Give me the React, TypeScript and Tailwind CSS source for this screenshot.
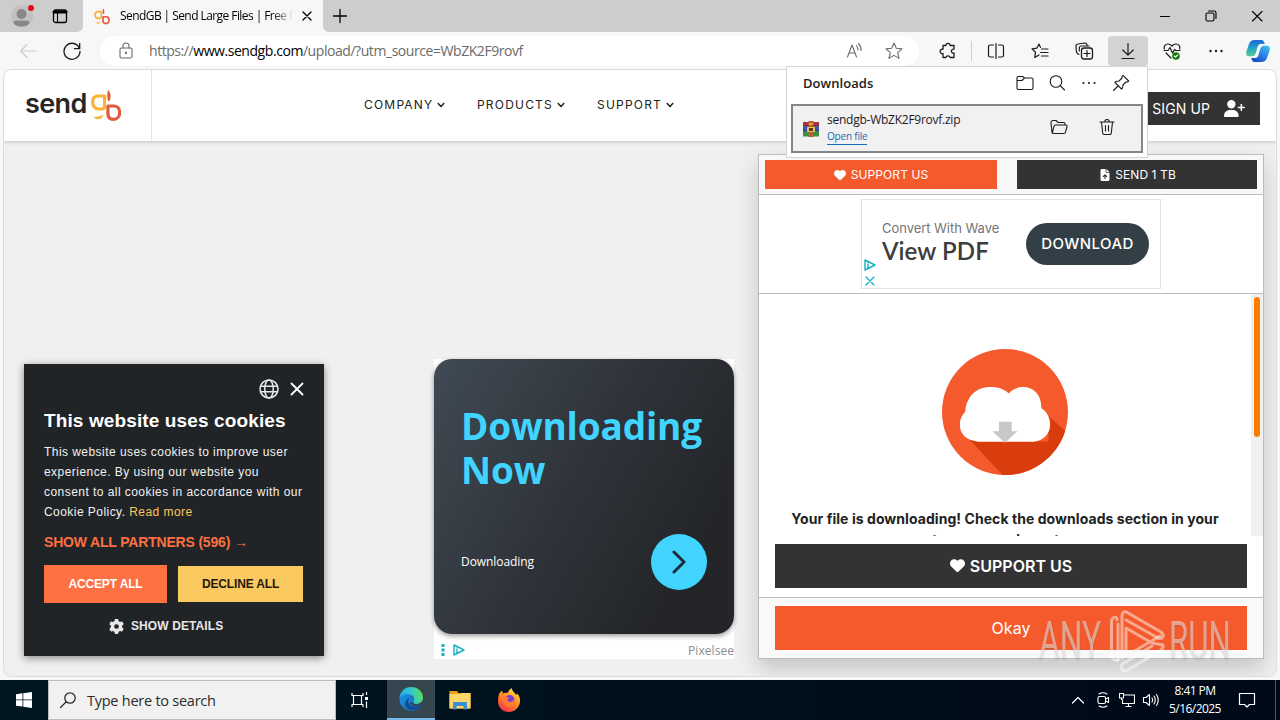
import React from "react";
import { FaHeart, FaUserPlus, FaFileArrowUp, FaGear } from "react-icons/fa6";

type SvgProps = { className?: string; vb?: string; children: React.ReactNode };

function Line({ className = "size-5", vb = "0 0 20 20", children }: SvgProps) {
  return (
    <svg
      viewBox={vb}
      className={`shrink-0 ${className}`}
      fill="none"
      stroke="currentColor"
      strokeWidth="1.1"
      strokeLinecap="round"
      strokeLinejoin="round"
    >
      {children}
    </svg>
  );
}

function GbMark({ className }: { className?: string }) {
  return (
    <svg viewBox="0 0 32 33" className={`shrink-0 ${className}`} fill="none" strokeWidth="3.2" strokeLinejoin="round">
      <path d="M14.6 7H8.2C4.2 7 2.6 9.8 2.6 13C2.6 17 4.8 20 8.8 20H11.5Q14.6 20 14.6 17Z" stroke="#f9b233" />
      <path d="M3.5 28C7 28.300 10.500 27 13.500 25.500C12.500 30 7 32.500 3.500 28Z" fill="#f9b233" />
      <path d="M17.900 17H24C28 17 29.700 20 29.700 23.500C29.700 27.500 27 30.400 23.500 30.400C19.800 30.400 17.900 28 17.900 24.500Z" stroke="#e2593c" />
      <path d="M18 1C20.500 3.500 21.500 7 19.500 12H18C17 8.500 17 4 18 1Z" fill="#e2593c" />
    </svg>
  );
}

function TabStrip() {
  return (
    <div className="flex h-8 shrink-0 bg-[#f7f7f7] text-black">
      <div className="flex w-[83px] items-center gap-[18px] rounded-br-md bg-[#cdcdcd] pl-[10px]">
        <svg viewBox="0 0 24 24" className="size-6">
          <circle cx="12" cy="12" r="11" fill="#c3c1c0" />
          <circle cx="11.500" cy="10" r="5" fill="#898786" />
          <path d="M3.500 19C3.500 16.500 5.500 16.500 11.500 16.500S19.500 16.500 19.500 19C18.500 21.500 14.500 22.500 11.500 22.500S4.500 21.500 3.500 19Z" fill="#898786" />
          <circle cx="21" cy="4" r="3" fill="#e00b1c" />
        </svg>
        <Line className="size-4" vb="0 0 16 16">
          <rect x="1.5" y="2" width="13" height="12.5" rx="2" strokeWidth="1.3" />
          <path d="M2 4H14" strokeWidth="3" />
          <path d="M5.5 5V14" />
        </Line>
      </div>
      <div className="flex w-[240px] items-center pl-[10px]">
        <GbMark className="h-[17px] w-[18px]" />
        <div className="ml-[9px] w-[173px] shrink-0 overflow-hidden bg-linear-to-r from-black from-88% to-transparent bg-clip-text font-['Open_Sans','Noto_Sans',sans-serif] text-[12px] leading-5 tracking-[-0.57px] whitespace-nowrap text-transparent">
          SendGB | Send Large Files | Free f
        </div>
        <Line className="ml-[8px] size-3" vb="0 0 12 12">
          <path d="M2 2L10 10M10 2L2 10" strokeWidth="1.3" />
        </Line>
      </div>
      <div className="flex flex-1 items-center rounded-bl-md bg-[#cdcdcd] pl-[9px]">
        <Line className="size-4" vb="0 0 16 16">
          <path d="M8 1.5V14.5M1.5 8H14.5" strokeWidth="1.3" />
        </Line>
        <div className="ml-auto flex items-center pr-[15px]">
          <Line className="mr-[34px] size-3" vb="0 0 12 12">
            <path d="M1.5 6.5H10.5" strokeWidth="1" />
          </Line>
          <Line className="mr-[32px] size-3" vb="0 0 12 12">
            <rect x="1" y="3" width="8" height="8" rx="1.5" />
            <path d="M3.5 1H9A2 2 0 0 1 11 3V8.5" />
          </Line>
          <Line className="size-4" vb="0 0 16 16">
            <path d="M3.5 3.5L13 13M13 3.5L3.5 13" />
          </Line>
        </div>
      </div>
    </div>
  );
}

function Cell({ children, active = false }: { children: React.ReactNode; active?: boolean }) {
  return (
    <div
      className={`flex h-[30px] shrink-0 items-center justify-center ${
        active ? "mx-[2px] w-10 rounded-[4px] bg-[#d3d3d3]" : "w-11"
      }`}
    >
      {children}
    </div>
  );
}

function Copilot() {
  return (
    <svg viewBox="0 0 24 24" className="size-6">
      <defs>
        <linearGradient id="cpA" x1="0.3" y1="0" x2="0.4" y2="1">
          <stop offset="0" stopColor="#1b63d8" />
          <stop offset="0.45" stopColor="#1f9fd0" />
          <stop offset="1" stopColor="#56d08e" />
        </linearGradient>
        <linearGradient id="cpB" x1="1" y1="0" x2="0.3" y2="1">
          <stop offset="0" stopColor="#39c8ef" />
          <stop offset="0.5" stopColor="#2f87ee" />
          <stop offset="1" stopColor="#154fc4" />
        </linearGradient>
      </defs>
      <path d="M9 1H15.5C17.5 1 18.2 3 18.8 5H15C12.8 5 12 6.6 11.4 8.6L9.8 14C9.2 16 8 17.3 6 17.3H3C.4 17.3-.2 15 .4 12.6L3 5C4 2.2 5.6 1 9 1Z" fill="url(#cpA)" />
      <path d="M15 23H8.500C6.500 23 5.800 21 5.200 19H9C11.200 19 12 17.400 12.600 15.400L14.200 10C14.800 8 16 6.700 18 6.700H21C23.600 6.700 24.200 9 23.600 11.400L21 19C20 21.800 18.400 23 15 23Z" fill="url(#cpB)" />
    </svg>
  );
}

function Toolbar() {
  return (
    <div className="flex h-9 shrink-0 items-center bg-[#f7f7f7] pt-[2px] text-[#1b1b1b]">
      <Line className="ml-[18px] size-5 text-[#c9c9c9]">
        <path d="M18 10H2.500M9 3.500L2.500 10L9 16.500" />
      </Line>
      <Line className="ml-[24px] size-5">
        <path d="M17.500 7.500A8 8 0 1 0 18 10.500M17.700 2.500V7.700H12.500" strokeWidth="1.300" />
      </Line>
      <div className="ml-[18px] flex h-[30px] w-[819px] items-center rounded-full bg-white text-[#6b6b6b]">
        <Line className="ml-[16px] size-5">
          <rect x="4" y="7" width="12" height="10" rx="1.500" />
          <path d="M7 7V5A3 3 0 0 1 13 5V7" />
          <circle cx="10" cy="12" r=".6" fill="currentColor" />
        </Line>
        <div className="ml-[13px] font-['Open_Sans','Noto_Sans',sans-serif] text-[14px] leading-5 tracking-[-0.44px] whitespace-nowrap">
          https://<span className="text-black">www.sendgb.com</span>/upload/?utm_source=WbZK2F9rovf
        </div>
        <Line className="ml-auto size-5">
          <path d="M3.500 16L8 4L12.500 16M5 12H11M12.500 4.500Q14 6.500 14 9M14.500 2.500Q17.500 5.500 17 9.500" />
        </Line>
        <Line className="mr-[15px] ml-[20px] size-5">
          <path d="M10 2L12.300 7.300L18 7.900L13.700 11.700L15 17.400L10 14.400L5 17.400L6.300 11.700L2 7.900L7.700 7.300Z" />
        </Line>
      </div>
      <div className="ml-[7px] flex items-center">
        <Cell>
          <Line>
            <path d="M5 4.500H7.800A2.200 2.200 0 1 1 12.200 4.500H16V8.200A2 2 0 1 0 16 12V16.500H12.200A2.300 2.300 0 0 0 7.800 16.500H5V12.500A2.200 2.200 0 1 1 5 8.300Z" strokeWidth="1.300" />
          </Line>
        </Cell>
        <div className="mr-[2px] ml-px h-5 w-px bg-[#cfcfcf]" />
        <Cell>
          <Line>
            <path d="M7.500 4H4A1.500 1.500 0 0 0 2.500 5.500V14.500A1.500 1.500 0 0 0 4 16H7.500M12.500 4H16A1.500 1.500 0 0 1 17.500 5.500V14.500A1.500 1.500 0 0 1 16 16H12.500M10 2.500V17.500" strokeWidth="1.200" />
          </Line>
        </Cell>
        <Cell>
          <Line>
            <path d="M10.500 6.500L9 3L6.800 7.200L2 7.900L5.500 11.300L4.700 16.500L9 14M11.500 8H18M10.500 11.500H18M11.500 15H18" strokeWidth="1.200" />
          </Line>
        </Cell>
        <Cell>
          <Line>
            <rect x="7.500" y="7" width="11" height="11" rx="2.500" strokeWidth="1.300" />
            <path d="M13 9.500V15.500M10 12.500H16M4.800 13.300C3 13 2.500 11.500 2.300 9.500L2 5.500A2.200 2.200 0 0 1 4 3L10.500 2C12 2 13 3 13.200 4.500M5.300 10V7A2 2 0 0 1 7.300 5H15" strokeWidth="1.200" />
          </Line>
        </Cell>
        <Cell active>
          <Line>
            <path d="M10 2.500V14M4.800 9L10 14.200L15.200 9M4 17.500H16" strokeWidth="1.200" />
          </Line>
        </Cell>
        <Cell>
          <Line>
            <path d="M2.300 8C1.500 5 3.500 3 6 3C8 3 9 4 10 5C11 4 12 3 14 3C16.500 3 18.500 5 17.700 8M2 9.500H6L8 6.500L10.500 12L12.500 8.500L13.500 9.500H18M4 12L9 17" strokeWidth="1.200" />
            <circle cx="14" cy="15" r="3.800" fill="#107c10" stroke="none" />
            <path d="M12.300 15L13.500 16.200L15.800 13.900" stroke="white" />
          </Line>
        </Cell>
        <Cell>
          <svg viewBox="0 0 20 20" className="size-5" fill="currentColor">
            <circle cx="4.500" cy="10" r="1.200" />
            <circle cx="10" cy="10" r="1.200" />
            <circle cx="15.500" cy="10" r="1.200" />
          </svg>
        </Cell>
        <div className="ml-[8px]">
          <Copilot />
        </div>
      </div>
    </div>
  );
}

function NavItem({ label, className }: { label: string; className: string }) {
  return (
    <div className={`flex items-center gap-[4px] ${className}`}>
      <span>{label}</span>
      <Line className="size-2" vb="0 0 8 8">
        <path d="M1.200 2.500L4 5.500L6.800 2.500" strokeWidth="1.500" />
      </Line>
    </div>
  );
}

function SiteHeader() {
  return (
    <header className="flex h-[71px] shrink-0 bg-white shadow-[0_1px_4px_rgba(0,0,0,0.2)]">
      <div className="flex w-[148px] shrink-0 border-r border-[#e4e4e4] pt-[18px] pl-[21px]">
        <div className="w-[65px] shrink-0 font-['Inter','Liberation_Sans',sans-serif] text-[27px] leading-[32px] font-semibold tracking-[-0.6px] text-[#262626]">
          send
        </div>
        <GbMark className="mt-px h-[33px] w-[32px]" />
      </div>
      <nav className="flex h-[70px] items-center pl-[212px] font-['Inter','Liberation_Sans',sans-serif] text-[12px] tracking-[1.2px] text-[#222]">
        <NavItem label="COMPANY" className="w-[113px]" />
        <NavItem label="PRODUCTS" className="w-[120px]" />
        <NavItem label="SUPPORT" className="w-[100px]" />
      </nav>
      <div className="mt-[22px] mr-[16px] ml-auto flex h-[33px] w-[130px] items-center justify-end bg-[#333] pr-[15px] font-['Inter','Liberation_Sans',sans-serif] text-[14px] tracking-[0.1px] whitespace-nowrap text-white">
        SIGN UP
        <FaUserPlus className="ml-[14px] h-[17px] w-[21px]" />
      </div>
    </header>
  );
}

function CookieDialog() {
  return (
    <section className="mt-[223px] ml-[20px] flex h-[292px] w-[300px] shrink-0 flex-col bg-[#212427] px-5 font-['Liberation_Sans',Arial,sans-serif] text-white shadow-[0_2px_8px_rgba(0,0,0,0.45)]">
      <div className="flex items-center justify-end gap-[11px] pt-[15px]">
        <Line className="size-5 text-[#e8e8e8]">
          <circle cx="10" cy="10" r="9" strokeWidth="1.500" />
          <ellipse cx="10" cy="10" rx="4.300" ry="9" strokeWidth="1.500" />
          <path d="M1.500 7.200H18.500M1.500 12.800H18.500" strokeWidth="1.500" />
        </Line>
        <Line className="size-[14px] text-white" vb="0 0 14 14">
          <path d="M1.500 1.500L12.500 12.500M12.500 1.500L1.500 12.500" strokeWidth="1.800" />
        </Line>
      </div>
      <h2 className="mt-[10px] text-[19px] leading-6 font-bold tracking-[0.12px] whitespace-nowrap">
        This website uses cookies
      </h2>
      <p className="mt-[9px] text-[12px] leading-5 tracking-[0.45px] whitespace-nowrap text-[#f1f1f1]">
        This website uses cookies to improve user
        <br />
        experience. By using our website you
        <br />
        consent to all cookies in accordance with our
        <br />
        Cookie Policy. <span className="text-[#fcc65c]">Read more</span>
      </p>
      <div className="mt-[10px] text-[14px] leading-5 font-bold tracking-[-0.18px] whitespace-nowrap text-[#fd6f42]">
        SHOW ALL PARTNERS (596) <span className="font-normal">→</span>
      </div>
      <div className="mt-[13px] flex items-center justify-between text-[12px] font-bold tracking-[-0.15px]">
        <div className="flex h-[38px] w-[123px] items-center justify-center bg-[#fe7143]">ACCEPT ALL</div>
        <div className="mr-[1px] flex h-[36px] w-[125px] items-center justify-center bg-[#fac95f] text-[#26190c]">DECLINE ALL</div>
      </div>
      <div className="mt-[14px] flex items-center gap-[7px] pl-[65px] text-[12px] leading-[18px] font-bold tracking-[0.1px] whitespace-nowrap text-[#e8e8e8]">
        <FaGear className="size-[15px]" />
        SHOW DETAILS
      </div>
    </section>
  );
}

function AdChoice({ className }: { className?: string }) {
  return (
    <Line className={`text-[#17b0c4] ${className}`} vb="0 0 12 12">
      <path d="M1 1L11 6L1 11ZM4 5V9M4 3.500V3.600" strokeWidth="1.400" />
    </Line>
  );
}

function DownloadingAd() {
  return (
    <section className="mt-[218px] ml-[110px] flex h-[300px] w-[300px] shrink-0 flex-col bg-white font-['Open_Sans','Noto_Sans',sans-serif]">
      <div className="flex h-[275px] flex-col rounded-[18px] bg-linear-[120deg,#3f4a54_0%,#30343a_45%,#232529_80%] pl-[27px] shadow-[0_2px_5px_rgba(0,0,0,0.4)]">
        <div className="flex flex-col pt-[45px] text-[37px] leading-[44px] font-bold tracking-[-0.17px] text-[#40d4ff]">
          <span>Downloading</span>
          <span>Now</span>
        </div>
        <div className="mt-[42px] flex items-center justify-between pr-[27px] text-[12px] tracking-[-0.07px] text-white">
          Downloading
          <div className="flex size-14 items-center justify-center rounded-full bg-[#40d4ff] text-[#1f2c38]">
            <Line className="h-6 w-4" vb="0 0 16 24">
              <path d="M3 2L13 12L3 22" strokeWidth="3" />
            </Line>
          </div>
        </div>
      </div>
      <div className="flex flex-1 items-center pt-[7px] pl-[7px]">
        <svg viewBox="0 0 4 12" className="h-3 w-1" fill="#17b0c4">
          <path d="M.5 0h3v3h-3zM.5 4.500h3v3h-3zM.5 9h3v3h-3z" />
        </svg>
        <AdChoice className="ml-[8px] size-3" />
        <span className="mt-[2px] ml-auto text-[12px] leading-4 tracking-[0.05px] text-[#8e8e8e]">Pixelsee</span>
      </div>
    </section>
  );
}

function CloudBadge() {
  return (
    <svg viewBox="565 54 380 380" className="size-[128px] shrink-0">
      <circle cx="755" cy="244" r="187" fill="#f45a2b" />
      <path d="M650 326L748 431A187 187 0 0 0 934 300L884 256V332Z" fill="#da3d0d" />
      <path
        d="M675 332C640 328 621 310 621 282C621 265 628 252 637 243C640 200 668 170 712 170C735 170 752 176 766 189C776 177 790 170 808 170C842 170 863 194 863 233C879 243 889 260 889 282C889 310 866 332 838 332Z"
        fill="#fff"
      />
      <path d="M737 273H775V301H792L755 335L717 301H737Z" fill="#c8c8c8" />
    </svg>
  );
}

function DownloadModal() {
  return (
    <section className="mt-[13px] ml-[24px] flex h-[505px] w-[506px] shrink-0 flex-col border border-[#bcbcbc] bg-white font-['Inter','Liberation_Sans',sans-serif] shadow-[0_10px_20px_rgba(0,0,0,0.18)]">
      <div className="flex h-[40px] shrink-0 justify-between border-b border-[#bcbcbc] bg-[#f8f8f8] px-[6px] pt-[5px] text-[12px] tracking-[0.1px] text-white">
        <div className="flex h-[29px] w-[232px] items-center justify-center gap-[5px] bg-[#f45a2b]">
          <FaHeart className="size-3" />
          SUPPORT US
        </div>
        <div className="flex h-[29px] w-[240px] items-center justify-center gap-[5px] bg-[#333] pl-[2px]">
          <FaFileArrowUp className="h-3 w-[10px]" />
          SEND 1 TB
        </div>
      </div>
      <div className="flex h-[99px] shrink-0 border-b border-[#bcbcbc] pt-[4px] pl-[102px]">
        <div className="flex h-[90px] w-[300px] border border-[#e2e2e2]">
          <div className="flex w-[20px] flex-col items-center gap-[5px] pt-[59px] pr-[5px]">
            <AdChoice className="size-3" />
            <Line className="size-[10px] text-[#17b0c4]" vb="0 0 10 10">
              <path d="M1 1L9 9M9 1L1 9" strokeWidth="1.300" />
            </Line>
          </div>
          <div className="w-[144px] pt-[19px] text-[#3c3c3c]">
            <div className="text-[13px] leading-[18px] tracking-[-0.04px] whitespace-nowrap text-[#757575]">Convert With Wave</div>
            <div className="font-['Lato','Open_Sans',sans-serif] text-[24px] leading-[28px] font-semibold tracking-[0.1px]">View PDF</div>
          </div>
          <div className="mt-[23px] flex h-[42px] w-[123px] items-center justify-center rounded-full bg-[#323f47] text-[15px] font-medium tracking-[0.45px] text-white">
            DOWNLOAD
          </div>
        </div>
      </div>
      <div className="flex h-[242px] shrink-0 overflow-hidden">
        <div className="flex w-[492px] shrink-0 flex-col items-center pt-[54px]">
          <CloudBadge />
          <p className="mt-[32px] text-center text-[14px] leading-[21px] font-bold tracking-[0.06px] whitespace-nowrap text-[#222]">
            Your file is downloading! Check the downloads section in your
            <br />
            computer or your phone to access.
          </p>
        </div>
        <div className="w-[12px] bg-[#f0f0f0] pt-[3px] pl-[3px]">
          <div className="h-[140px] w-[6px] rounded-full bg-[#fb7a00]" />
        </div>
      </div>
      <div className="flex h-[62px] shrink-0 justify-center border-b border-[#bcbcbc] pt-[8px]">
        <div className="flex h-[44px] w-[472px] items-center justify-center gap-[5px] bg-[#333] pb-px text-[16px] font-semibold text-white">
          <FaHeart className="size-[15px]" />
          SUPPORT US
        </div>
      </div>
      <div className="flex flex-1 justify-center bg-[#f9f9f9] pt-[8px]">
        <div className="flex h-[44px] w-[472px] items-center justify-center bg-[#f45a2b] pb-px text-[16px] text-white">Okay</div>
      </div>
    </section>
  );
}

function ArchiveIcon() {
  return (
    <svg viewBox="0 0 16 16" className="size-4">
      <path d="M0 1H16V5.500H0Z" fill="#a8324a" />
      <path d="M0 5.500H16V10.500H0Z" fill="#3558b5" />
      <path d="M0 10.500H16V15.500H0Z" fill="#3b9142" />
      <path d="M0 5H16M0 10H16" stroke="#2a2026" strokeWidth=".7" />
      <path d="M5.500 0H10.500V16H5.500Z" fill="#b5632c" />
      <path d="M4 6H12V11H4Z" fill="#e9c15d" />
      <path d="M6 7H10V10H6Z" fill="#57341d" />
      <path d="M6 2H10V4H6Z" fill="#f0a030" />
    </svg>
  );
}

function DownloadsFlyout() {
  return (
    <aside className="absolute top-[66px] left-[786px] flex h-[92px] w-[362px] flex-col border border-[#d4d4d4] bg-white px-[4px] font-['Open_Sans','Noto_Sans',sans-serif] text-[#1b1b1b]">
      <div className="flex h-[37px] shrink-0 items-center gap-[12px] pr-[12px] pb-[5px] pl-[12px]">
        <div className="mr-auto pt-px text-[13px] font-semibold tracking-[0.05px]">Downloads</div>
        <Line>
          <path d="M2 6.500V15A1.500 1.500 0 0 0 3.500 16.500H16.500A1.500 1.500 0 0 0 18 15V6.500A1.500 1.500 0 0 0 16.500 5H9.500L7.500 3.500H3.500A1.500 1.500 0 0 0 2 5ZM2 7.500H7L9.500 5" />
        </Line>
        <Line>
          <circle cx="9" cy="8.500" r="5.800" />
          <path d="M13.200 12.700L17.500 17" />
        </Line>
        <svg viewBox="0 0 20 20" className="size-5" fill="currentColor">
          <circle cx="4.500" cy="10" r="1.100" />
          <circle cx="10" cy="10" r="1.100" />
          <circle cx="15.500" cy="10" r="1.100" />
        </svg>
        <Line>
          <path d="M12 2.300L17.700 8L16.500 9L15 9L12 12L11.500 15L10.500 16L4 9.500L5 8.500L8 8L11 5V3.300ZM7 13L2.500 17.500" strokeWidth="1.100" />
        </Line>
      </div>
      <div className="flex h-[49px] shrink-0 items-center border-2 border-[#858585] bg-[#f1f1f1] pl-[10px]">
        <ArchiveIcon />
        <div className="ml-[8px] self-start pt-[6px]">
          <div className="text-[12px] leading-4 tracking-[-0.25px] whitespace-nowrap">sendgb-WbZK2F9rovf.zip</div>
          <span className="block w-fit border-b border-[#1769b3] text-[10px] leading-[16px] tracking-[-0.2px] text-[#1769b3]">
            Open file
          </span>
        </div>
        <Line className="mb-[3px] ml-auto size-5">
          <path d="M4.500 16.500A1.500 1.500 0 0 1 3 15.500L2 6A2 2 0 0 1 4 3.500H7L9 5.500H14.500A1.500 1.500 0 0 1 16 7V8M4.500 16.500H15A1.500 1.500 0 0 0 16.500 15.200L18 9.500A1.200 1.200 0 0 0 17 8H6.500A1.500 1.500 0 0 0 5 9.200L3.300 16" strokeWidth="1.100" />
        </Line>
        <Line className="mr-[24px] mb-[3px] ml-[28px] size-5">
          <path d="M3 5H17M4.500 5L5.700 16A1.500 1.500 0 0 0 7.200 17.500H12.800A1.500 1.500 0 0 0 14.300 16L15.500 5M7.800 5A2.200 2.500 0 0 1 12.200 5M8.500 8.500V14M11.500 8.500V14" strokeWidth="1.100" />
        </Line>
      </div>
    </aside>
  );
}

function Watermark() {
  return (
    <div className="absolute top-[606px] left-[1039px] flex h-[70px] w-[200px] font-['Roboto','Liberation_Sans',sans-serif] text-[52px] leading-[70px] font-normal text-white/45 [text-shadow:0_1px_2px_rgba(90,90,90,0.3)]">
      <div className="w-[67px] shrink-0">
        <div className="w-[110px] origin-left scale-x-[0.61]">ANY</div>
      </div>
      <svg viewBox="0 0 60 70" className="h-[70px] w-[60px] shrink-0" fill="none" stroke="#fff" strokeOpacity=".48" strokeWidth="3" strokeLinejoin="round" strokeLinecap="round">
        <path d="M11 14C12 10 5.500 10 5.500 16V49C5.500 53 9 55 12 54" />
        <path d="M12 54V18M16 52V11C16 5 19 5 22 7L55 26C59 29 57 34 52 32L20 14" />
        <path d="M20 22V50L54 30M20 22L46 37L57 39C58 41 56 43 55 44L22 64C19 66 16 65 15 61C15 59 16 58 18 57L46 40" />
      </svg>
      <div className="ml-[3px] w-[70px] shrink-0">
        <div className="w-[110px] origin-left scale-x-[0.6]">RUN</div>
      </div>
    </div>
  );
}

function EdgeLogo() {
  return (
    <svg viewBox="0 0 24 24" className="size-6">
      <defs>
        <linearGradient id="edA" x1="0" y1="0.5" x2="1" y2="0.3">
          <stop offset="0" stopColor="#2aa7e8" />
          <stop offset="0.5" stopColor="#30c6d0" />
          <stop offset="1" stopColor="#5fe052" />
        </linearGradient>
        <linearGradient id="edB" x1="0" y1="0" x2="1" y2="1">
          <stop offset="0" stopColor="#1b9de2" />
          <stop offset="1" stopColor="#1260b8" />
        </linearGradient>
      </defs>
      <path d="M12 1A11.500 11 0 0 0 .5 12A11.500 11.500 0 0 0 12 23.800C17 23.800 20 21.500 22 18.500L12 9Z" fill="url(#edB)" />
      <path d="M.5 11C1 4.500 6 0 12 0C19 0 24 5 24 10.500C24 14.500 21 17 17.500 17C15 17 13.700 16 14.300 15C15 14 15.500 13 15 11.500C14.300 8.500 10.500 6.500 7 7C3.500 7.500 1.500 9.500.5 11Z" fill="url(#edA)" />
      <path d="M9.300 13.500C8 18.500 15 22 21.500 17.500C22 17.300 22.500 17.600 22 18.300C18 24 9 25 6.500 19C5.500 15.500 7 12.500 10 11Z" fill="#0f4c94" />
      <path d="M14.500 15C13.500 16.200 15.500 17.500 18 17C19.500 16.800 21 16.300 22 15.300L21.500 17.500C17 20 12.500 19 10.500 16Z" fill="#36464f" />
    </svg>
  );
}

function Taskbar() {
  return (
    <div className="flex h-10 shrink-0 bg-linear-to-r from-[#001722] to-[#000918] font-['Open_Sans','Noto_Sans',sans-serif] text-white">
      <div className="flex w-12 items-center pl-[16px]">
        <svg viewBox="0 0 16 16" className="size-4" fill="#fff">
          <path d="M0 2.200L6.500 1.300V7.500H0ZM7.300 1.200L16 0V7.500H7.300ZM0 8.300H6.500V14.600L0 13.700ZM7.300 8.300H16V16L7.300 14.800Z" />
        </svg>
      </div>
      <div className="flex w-[288px] items-center border border-[#bcbcbc] bg-[#f1f1f1] pl-[10px] text-[#2b2b2b]">
        <Line className="size-[18px]" vb="0 0 18 18">
          <circle cx="11" cy="7" r="5.200" strokeWidth="1.300" />
          <path d="M7 11L1.500 16.500" strokeWidth="1.300" />
        </Line>
        <span className="mt-[2px] ml-[10px] text-[14.500px] leading-5 tracking-[-0.25px] whitespace-nowrap">Type here to search</span>
      </div>
      <div className="flex w-[51px] items-center pl-[15px]">
        <Line className="h-4 w-[18px]" vb="0 0 18 16">
          <path d="M1 1V3.500H12V1M1 15V12.500H12V15M2.500 3.500V12.500M10.500 3.500V12.500M15.500 0V3M15.500 9.500V16" strokeWidth="1.200" strokeLinecap="butt" />
          <path d="M14 5H17V8H14Z" fill="currentColor" stroke="none" />
        </Line>
      </div>
      <div className="flex w-12 items-center justify-center border-b-2 border-[#76b9ed] bg-[#36464f]">
        <EdgeLogo />
      </div>
      <div className="flex w-[49px] items-center justify-center">
        <svg viewBox="0 0 22 20" className="h-5 w-[22px]">
          <path d="M.5 1H8L9.500 3H21.500V18.500H.5Z" fill="#e8a317" />
          <path d="M.5 4H12L13 3H21.500V18.500H.5Z" fill="#ffd668" />
          <path d="M4 12H18V19.500H14.500V16H7.500V19.500H4Z" fill="#3b8fd2" />
        </svg>
      </div>
      <div className="flex w-[49px] items-center justify-center">
        <svg viewBox="0 0 24 24" className="size-6">
          <defs>
            <linearGradient id="ffA" x1="0.8" y1="0" x2="0.2" y2="1">
              <stop offset="0" stopColor="#ffe14a" />
              <stop offset="0.5" stopColor="#ff8a1f" />
              <stop offset="1" stopColor="#f5274e" />
            </linearGradient>
          </defs>
          <path d="M2.500 5L5 2.500L6 5.500C8 4.500 10 4.500 11 5C11 3 13 1 14.500 0C15 3 18 4.500 19 7L20 5.500C22.500 8 23.500 11 23 14C22 20 17.500 24 12 24C5.500 24 1 19.500 1 13C1 10 1.500 7 2.500 5Z" fill="url(#ffA)" />
          <circle cx="12.500" cy="12" r="5" fill="#7a3fd0" />
          <path d="M5 8C8 7.500 11 9 12.500 10.500C10 10.500 10 12 11 13C13 15 16 14 17 11C20 17 15 20 11 19C7 18 5 13 5 8Z" fill="#ff7a2f" />
        </svg>
      </div>
      <div className="ml-auto flex items-center pr-[19px]">
        <Line className="size-3" vb="0 0 12 12">
          <path d="M.5 9L6 3.500L11.500 9" strokeWidth="1.200" />
        </Line>
        <Line className="ml-[11px] size-4" vb="0 0 16 16">
          <rect x="3" y="4.500" width="7.500" height="7" rx="1.500" />
          <path d="M10.500 7L13.500 5.500V10.500L10.500 9M4 2Q8 -.5 12 2M4 14Q8 16.500 12 14" />
        </Line>
        <Line className="ml-[8px] size-4" vb="0 0 16 16">
          <path d="M5 3H15.500V11.500H3.500V7.500M9.500 11.500V14.500M6.500 14.500H12.500M.5 1.500H4.500V6H.5ZM2.500 6V8" strokeLinecap="butt" />
        </Line>
        <Line className="ml-[7px] size-[18px]" vb="0 0 18 18">
          <path d="M1.500 6.500V11.500H4L7.500 14.500V3.500L4 6.500ZM10 7Q11.200 9 10 11M12 5Q14.500 9 12 13M14.500 3.500Q18 9 14.500 14.500" />
        </Line>
        <div className="ml-[5px] w-[60px] text-center text-[12px] leading-[18px] tracking-[-0.55px] whitespace-nowrap">
          8:41 PM
          <br />
          5/16/2025
        </div>
        <Line className="ml-[13px] size-[18px]" vb="0 0 18 18">
          <path d="M1.500 2.500H16.500V13.500H11.500L9 16L6.500 13.500H1.500Z" strokeWidth="1.200" />
        </Line>
      </div>
      <div className="w-[5px] border-l border-[#4a5560]" />
    </div>
  );
}

export default function App() {
  return (
    <div className="relative flex h-[720px] w-[1280px] flex-col overflow-hidden bg-[#f7f7f7]">
      <TabStrip />
      <Toolbar />
      <div className="flex flex-1 px-[3px] pt-px pb-[3px]">
        <main className="flex w-[1274px] flex-col overflow-hidden rounded-[9px] border border-[#dcdcdc] bg-[#f0f0f0]">
          <SiteHeader />
          <div className="flex flex-1 items-start">
            <CookieDialog />
            <DownloadingAd />
            <DownloadModal />
          </div>
        </main>
      </div>
      <Taskbar />
      <DownloadsFlyout />
      <Watermark />
    </div>
  );
}
